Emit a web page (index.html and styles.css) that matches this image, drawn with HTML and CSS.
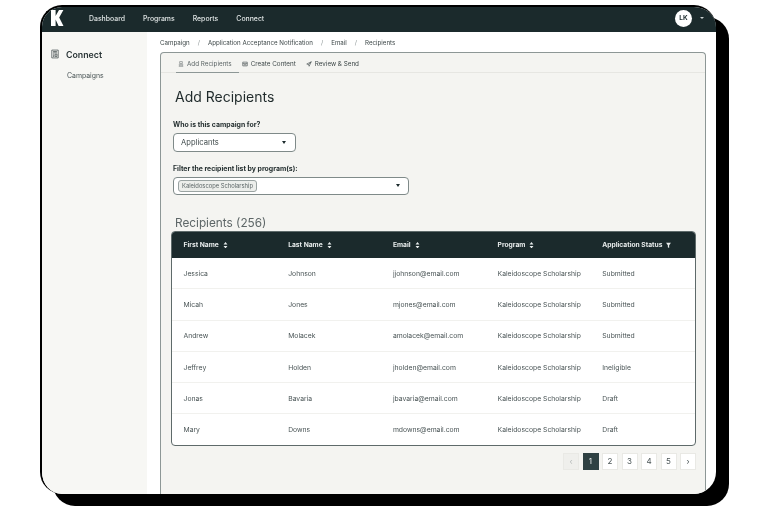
FILE: index.html
```html
<!DOCTYPE html>
<html lang="en">
<head>
<meta charset="utf-8">
<title>Add Recipients</title>
<link rel="stylesheet" href="styles.css">
</head>
<body>
<div class="device">
  <div class="screen">
    <header class="topbar">
      <svg class="logo" viewBox="0 0 12.5 16" aria-label="K"><path d="M0 0h4.6v6L8 0h4.4L8.2 7.4 12.5 16H7.6L4.6 9.5V16H0z" fill="#fff"/></svg>
      <nav class="topnav">
        <a>Dashboard</a><a>Programs</a><a>Reports</a><a>Connect</a>
      </nav>
      <div class="user"><span class="avatar">LK</span><span class="caret-small"></span></div>
    </header>
    <div class="body">
      <aside class="sidebar">
        <div class="side-head">
          <svg class="side-icon" viewBox="0 0 10 11"><path d="M1 .6h8v9.8H1zM2.6 2.4h4.8M2.6 4h4.8M2.6 5.6h1.6M5.2 5.6h2.2v3H5.2zM2.6 7.2h1.6M2.6 8.6h1.6" fill="none" stroke="#3a4446" stroke-width=".9"/></svg>
          <span>Connect</span>
        </div>
        <div class="side-link">Campaigns</div>
      </aside>
      <main class="main">
        <div class="crumbs">
          <span>Campaign</span><i>/</i><span>Application Acceptance Notification</span><i>/</i><span>Email</span><i>/</i><span>Recipients</span>
        </div>
        <section class="panel">
          <div class="tabs">
            <div class="tab active">
              <svg viewBox="0 0 8 8"><path d="M2.2.8h3.6v2.6H2.2zM1 5h6M1 7h6M2.5 5v2M5.5 5v2" fill="none" stroke="#5d6667" stroke-width=".7"/></svg>Add Recipients
            </div>
            <div class="tab">
              <svg viewBox="0 0 8 8"><path d="M1 1.5h6v5H1zM1 3.5h6M2.5 5h3" fill="none" stroke="#3d4748" stroke-width=".8"/></svg>Create Content
            </div>
            <div class="tab">
              <svg viewBox="0 0 8 8"><path d="M7 1 1 4l2.4.8.8 2.2zM3.4 4.8 7 1" fill="none" stroke="#3d4748" stroke-width=".8"/></svg>Review &amp; Send
            </div>
          </div>
          <div class="content">
            <h1>Add Recipients</h1>
            <label class="field-label">Who is this campaign for?</label>
            <div class="select small"><span>Applicants</span><b class="tri"></b></div>
            <label class="field-label second">Filter the recipient list by program(s):</label>
            <div class="select wide"><span class="chip">Kaleidoscope Scholarship</span><b class="tri"></b></div>
            <h2>Recipients (256)</h2>
            <div class="table">
              <div class="row head">
                <div>First Name<svg class="sort" viewBox="0 0 6 8"><path d="M3 0 5.4 3H.6zM3 8 .6 5h4.8z"/></svg></div>
                <div>Last Name<svg class="sort" viewBox="0 0 6 8"><path d="M3 0 5.4 3H.6zM3 8 .6 5h4.8z"/></svg></div>
                <div>Email<svg class="sort" viewBox="0 0 6 8"><path d="M3 0 5.4 3H.6zM3 8 .6 5h4.8z"/></svg></div>
                <div>Program<svg class="sort" viewBox="0 0 6 8"><path d="M3 0 5.4 3H.6zM3 8 .6 5h4.8z"/></svg></div>
                <div>Application Status<svg class="sort" viewBox="0 0 6 8"><path d="M0 1h6L3.8 4v3.4L2.2 6.4V4z"/></svg></div>
              </div>
              <div class="row"><div>Jessica</div><div>Johnson</div><div>jjohnson@email.com</div><div>Kaleidoscope Scholarship</div><div>Submitted</div></div>
              <div class="row"><div>Micah</div><div>Jones</div><div>mjones@email.com</div><div>Kaleidoscope Scholarship</div><div>Submitted</div></div>
              <div class="row"><div>Andrew</div><div>Molacek</div><div>amolacek@email.com</div><div>Kaleidoscope Scholarship</div><div>Submitted</div></div>
              <div class="row"><div>Jeffrey</div><div>Holden</div><div>jholden@email.com</div><div>Kaleidoscope Scholarship</div><div>Ineligible</div></div>
              <div class="row"><div>Jonas</div><div>Bavaria</div><div>jbavaria@email.com</div><div>Kaleidoscope Scholarship</div><div>Draft</div></div>
              <div class="row"><div>Mary</div><div>Downs</div><div>mdowns@email.com</div><div>Kaleidoscope Scholarship</div><div>Draft</div></div>
            </div>
            <div class="pager">
              <span class="page disabled">‹</span><span class="page current">1</span><span class="page">2</span><span class="page">3</span><span class="page">4</span><span class="page">5</span><span class="page">›</span>
            </div>
          </div>
        </section>
      </main>
    </div>
  </div>
</div>
</body>
</html>
```
FILE: styles.css
```css
* { box-sizing: border-box; }
html, body { margin: 0; padding: 0; background: #fff; }
body { width: 768px; height: 512px; overflow: hidden; font-family: Inter, "Liberation Sans", sans-serif; color: #3f4a4b; }

.device { position: relative; width: 676px; height: 489px; margin: 5px 0 0 40px; filter: blur(0.3px); }
.device::before { content: ""; position: absolute; left: 13px; top: 12px; width: 676px; height: 489px; background: #000; border-radius: 22px; }
.screen { position: relative; width: 676px; height: 489px; background: #fff; border: solid #000; border-width: 2px 0 0 2px; border-radius: 22px; overflow: hidden; display: flex; flex-direction: column; }

.topbar { flex: none; height: 25px; background: #1b2a2c; display: flex; align-items: center; padding: 0 0 3px 9px; color: #e8ecec; }
.logo { flex: none; width: 12.5px; height: 16px; margin-right: 25.5px; }
.topnav { display: flex; gap: 18px; font-size: 6.9px; font-weight: 500; color: #dfe4e4; }
.user { margin-left: auto; display: flex; align-items: center; gap: 8px; padding-right: 12px; }
.avatar { width: 17px; height: 17px; border-radius: 50%; background: #fff; color: #1b2a2c; font-size: 6.5px; font-weight: 700; display: flex; align-items: center; justify-content: center; }
.caret-small { width: 0; height: 0; border: 2px solid transparent; border-top: 2.5px solid #c9cfcf; border-bottom: 0; }

.body { flex: 1; display: flex; min-height: 0; }
.sidebar { flex: none; width: 105px; background: #f7f7f4; padding: 16px 0 0 9px; }
.side-head { display: flex; align-items: center; gap: 7px; font-size: 8.8px; font-weight: 600; color: #2b3637; height: 12px; }
.side-icon { width: 8px; height: 10px; }
.side-link { margin: 9.5px 0 0 16px; font-size: 6.9px; color: #4a5556; line-height: 12px; }

.main { flex: 1; min-width: 0; display: flex; flex-direction: column; padding: 0 10px 0 13px; }
.crumbs { flex: none; height: 20px; display: flex; align-items: center; font-size: 6.2px; color: #3d4748; }
.crumbs i { font-style: normal; color: #8b9495; margin: 0 8px; }

.panel { flex: 1; min-height: 0; background: #f4f4f1; border: 1px solid #8d9796; border-bottom: 0; border-radius: 4px 4px 0 0; }
.tabs { height: 20px; border-bottom: 1px solid #e6e6e2; display: flex; padding-left: 15px; gap: 3px; }
.tab { height: 20px; padding: 2px 7px 0 0; display: flex; align-items: center; gap: 3px; font-size: 6.3px; color: #3d4748; white-space: nowrap; }
.tab svg { flex: none; width: 6px; height: 6px; }
.tab.active { color: #5d6667; border-bottom: 1px solid #8d9796; padding-left: 2px; }

.content { padding: 14px 10px 0 10px; }
h1 { margin: 0 0 0 4px; font-size: 14px; line-height: 20px; font-weight: 400; color: #1f2a2b; }
.field-label { display: block; margin: 12.5px 0 0 2px; font-size: 6.9px; line-height: 10px; font-weight: 700; color: #1f2a2b; }
.field-label.second { margin-top: 12.5px; }
.select { margin: 3px 0 0 2px; height: 19px; background: #fff; border: 1px solid #7f8a89; border-radius: 4px; display: flex; align-items: center; justify-content: space-between; font-size: 7.6px; color: #3f4a4b; }
.select.small { width: 123px; padding: 0 9px 0 7px; }
.select.wide { width: 236px; height: 18px; margin-top: 2.5px; padding: 0 8px 0 4px; }
.tri { width: 0; height: 0; border: 2.2px solid transparent; border-top: 3px solid #1b2a2c; border-bottom: 0; }
.chip { font-size: 5.8px; color: #5b6566; background: #eceeeb; border: 1px solid #9aa3a2; border-radius: 3px; padding: 1px 3px; line-height: 8px; }

h2 { margin: 21.5px 0 0 4px; font-size: 11.8px; line-height: 15px; font-weight: 400; color: #5d6667; }
.table { margin-top: 0; width: 525px; border: 1px solid #5e6a6a; border-radius: 4px; background: #fff; overflow: hidden; }
.row { display: grid; grid-template-columns: repeat(5, 104.7px); height: 31.3px; align-items: center; font-size: 6.8px; color: #4a5556; border-bottom: 1px solid #f1f1ee; padding-left: 1px; }
.row:last-child { border-bottom: 0; height: 30.5px; }
.row > div { padding-left: 10.5px; white-space: nowrap; }
.row.head { height: 26px; background: #1b2a2c; color: #e8ecec; font-weight: 700; font-size: 6.7px; border-bottom: 0; }
.sort { width: 5px; height: 6.5px; margin-left: 4px; vertical-align: -1px; fill: #e8ecec; }

.pager { display: flex; justify-content: flex-end; gap: 3.5px; margin-top: 7px; width: 525px; }
.page { width: 16px; height: 17px; background: #fff; border: 1px solid #e9e9e5; display: flex; align-items: center; justify-content: center; font-size: 8px; color: #4a5556; }
.page.disabled { background: #efefec; color: #b5bab9; }
.page.current { background: #2f4143; border-color: #2f4143; color: #e8ecec; }
```
